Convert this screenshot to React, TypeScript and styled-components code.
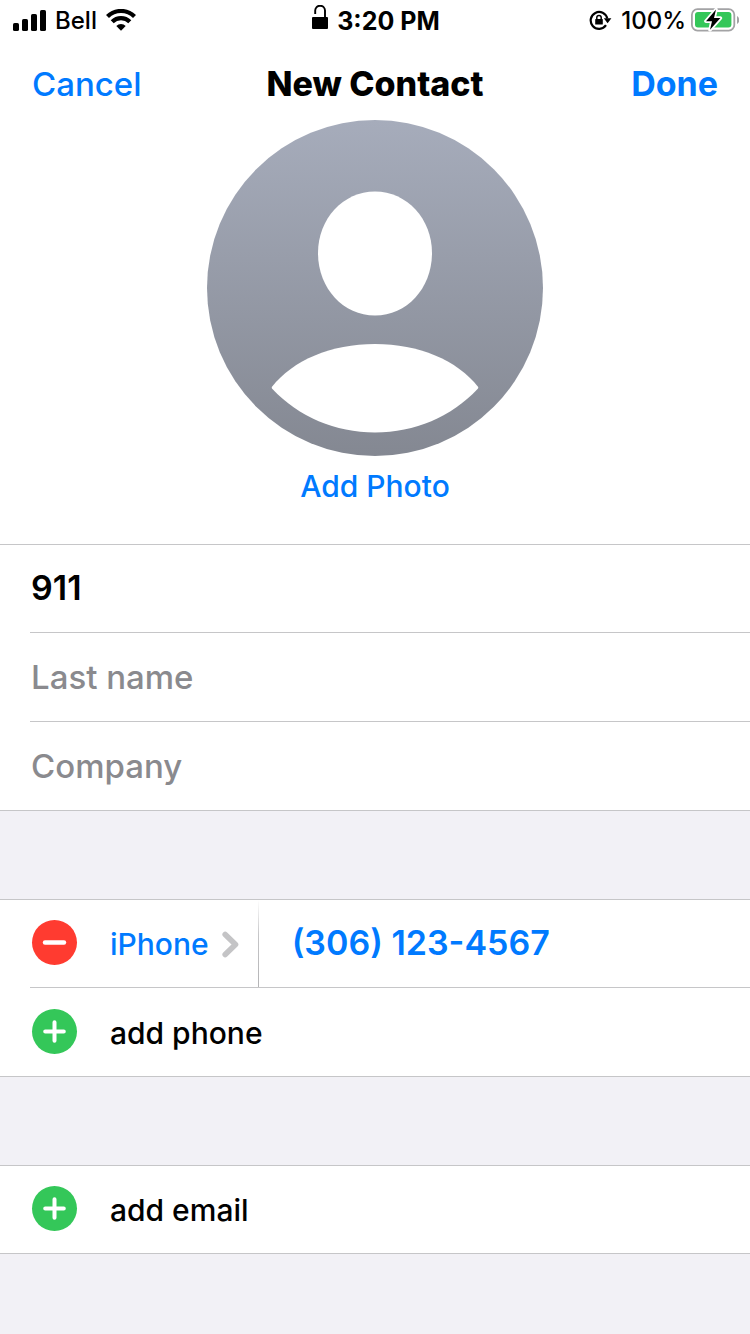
import React from "react";
import styled, { createGlobalStyle } from "styled-components";

const color = {
  blue: "#007aff",
  red: "#ff3b30",
  green: "#34c759",
  line: "#c6c6c8",
  placeholder: "#8a8a8e",
  grouped: "#f2f1f6",
  chevron: "#c4c4c6",
};

const GlobalStyle = createGlobalStyle`
  *, *::before, *::after { box-sizing: border-box; }
  html, body, #root { min-height: 100vh; }
  body {
    margin: 0;
    background: ${color.grouped};
    color: #000;
    font-family: Inter, "Liberation Sans", sans-serif;
  }
  button, input { font: inherit; color: inherit; }
`;

const Screen = styled.main`
  display: flex;
  flex-direction: column;
  min-height: 100vh;
  background: ${color.grouped};
`;

const StatusBar = styled.div`
  display: grid;
  grid-template-columns: 1fr auto 1fr;
  align-items: center;
  height: 40px;
  padding: 0 11px 0 13px;
  background: #fff;
  font-size: 24px;
  line-height: 38px;
`;

const StatusGroup = styled.div<{ $align: "start" | "center" | "end"; $gap: number }>`
  display: flex;
  align-items: center;
  justify-content: ${(p) => p.$align};
  gap: ${(p) => p.$gap}px;
  font-weight: 500;

  svg { display: block; flex: none; }
  span, time { padding-top: 2px; }
`;

const Time = styled.time`
  font-size: 25px;
  font-weight: 700;
`;

const NavBar = styled.header`
  display: grid;
  grid-template-columns: 1fr auto 1fr;
  align-items: center;
  height: 80px;
  padding: 8px 32px 0;
  background: #fff;
`;

const NavTitle = styled.h1`
  margin: 0;
  font-size: 34px;
  line-height: 40px;
  font-weight: 800;
`;

const TextButton = styled.button<{ $weight?: number; $size?: number; $side?: "start" | "end" }>`
  justify-self: ${(p) => p.$side ?? "center"};
  padding: 0;
  border: 0;
  background: none;
  color: ${color.blue};
  font-size: ${(p) => p.$size ?? 33}px;
  line-height: 40px;
  font-weight: ${(p) => p.$weight ?? 500};
  cursor: pointer;
`;

const PhotoArea = styled.section`
  display: flex;
  flex-direction: column;
  align-items: center;
  gap: 10px;
  padding-bottom: 38px;
  background: #fff;

  svg { display: block; }
`;

const Group = styled.section`
  border-top: 1px solid ${color.line};
  border-bottom: 1px solid ${color.line};
  background: #fff;

  & + & { margin-top: 88px; }
`;

const Row = styled.div`
  display: flex;
  align-items: center;
  height: 88px;
  margin-left: 30px;

  &:first-child { height: 87px; }
  & + & { border-top: 1px solid ${color.line}; height: 89px; }
`;

const Field = styled.input<{ $tint?: string }>`
  flex: 1;
  min-width: 0;
  height: 100%;
  padding: 0 0 2px 1px;
  border: 0;
  outline: 0;
  background: none;
  color: ${(p) => p.$tint ?? "#000"};
  font-size: 34px;
  font-weight: 600;

  &::placeholder {
    color: ${color.placeholder};
    font-size: 33px;
    font-weight: 500;
    opacity: 1;
  }
`;

const RoundButton = styled.button<{ $fill: string }>`
  display: grid;
  place-items: center;
  flex: none;
  width: 45px;
  height: 45px;
  margin: 0 33px 2px 2px;
  padding: 0;
  border: 0;
  border-radius: 50%;
  background: ${(p) => p.$fill};
  cursor: pointer;
`;

const LabelButton = styled.button<{ $tint?: string }>`
  display: flex;
  align-items: center;
  gap: 13px;
  padding: 1px 0 0;
  border: 0;
  background: none;
  color: ${(p) => p.$tint ?? "#000"};
  font-size: 30px;
  line-height: 40px;
  font-weight: 500;
  cursor: pointer;
`;

const Divider = styled.span`
  align-self: stretch;
  width: 1px;
  margin: 0 32px 0 19px;
  background: linear-gradient(to bottom, #fff, ${color.line} 40%, #b4b4b6);
`;

const SignalIcon = () => (
  <svg width="33" height="21" viewBox="0 0 33 21" aria-label="Signal">
    <rect x="0" y="13" width="6" height="8" rx="1.6" />
    <rect x="9" y="9" width="6" height="12" rx="1.6" />
    <rect x="18" y="4" width="6" height="17" rx="1.6" />
    <rect x="27" y="0" width="6" height="21" rx="1.6" />
  </svg>
);

const WifiIcon = () => (
  <svg width="30" height="22" viewBox="0 0 30 22" aria-label="Wi-Fi">
    <g fill="none" stroke="#000" strokeWidth="4.2">
      <path d="M1.5 7.5 A19.2 19.2 0 0 1 28.5 7.5" />
      <path d="M6.2 12.8 A12.3 12.3 0 0 1 23.8 12.8" />
    </g>
    <path d="M10.3 17 A6.8 6.8 0 0 1 19.7 17 L15 21.8 Z" />
  </svg>
);

const UnlockedIcon = () => (
  <svg width="17" height="30" viewBox="0 0 17 30" aria-label="Unlocked">
    <rect x="0" y="12" width="16" height="12" rx="1" />
    <path d="M3.2 9 V5.6 A4.9 4.9 0 0 1 13 5.6 V13" fill="none" stroke="#000" strokeWidth="1.9" />
  </svg>
);

const RotationLockIcon = () => (
  <svg width="27" height="20" viewBox="0 0 27 20" aria-label="Rotation lock">
    <path d="M17 15.2 A8.4 8.4 0 1 1 18.3 8.6" fill="none" stroke="#000" strokeWidth="2.2" />
    <path d="M14.8 8.2 H22.4 L18.6 13.2 Z" />
    <rect x="6.2" y="9" width="7.6" height="5.6" rx="0.6" />
    <path d="M7.8 9.4 V7.6 A2.2 2.2 0 0 1 12.2 7.6 V9.4" fill="none" stroke="#000" strokeWidth="1.5" />
  </svg>
);

const BatteryIcon = () => (
  <svg width="48" height="24" viewBox="0 0 48 24" aria-label="Battery charging">
    <rect x="0.9" y="1.2" width="42.4" height="21.4" rx="5.6" fill="none" stroke="#a3a3a5" strokeWidth="1.8" />
    <path d="M46 8 A4.6 4.6 0 0 1 46 16 Z" fill="#a3a3a5" />
    <rect x="4" y="4" width="36.4" height="15.6" rx="3" fill={color.green} />
    <path
      d="M25 1.6 L15 13.2 H21 L19 21.8 L29.4 10 H23 Z"
      fill="#000"
      stroke="#fff"
      strokeWidth="3.6"
      strokeLinejoin="round"
      paintOrder="stroke"
    />
  </svg>
);

const Avatar = () => (
  <svg width="336" height="336" viewBox="0 0 336 336" aria-hidden="true">
    <defs>
      <linearGradient id="avatar" x1="0" y1="0" x2="0" y2="1">
        <stop offset="0" stopColor="#a6acbb" />
        <stop offset="1" stopColor="#848892" />
      </linearGradient>
    </defs>
    <circle cx="168" cy="168" r="168" fill="url(#avatar)" />
    <path
      d="M168 71.5 C200 71.5 225 99 225 133 C225 168 200 195.5 168 195.5 C136 195.5 111 168 111 133 C111 99 136 71.5 168 71.5 Z"
      fill="#fff"
    />
    <path
      d="M64.8 267 C86 240 124 224 168 224 C212 224 250 240 271.2 267 Q271.5 268 270.8 268.8 C244 297 208 312.5 168 312.5 C128 312.5 92 297 65.2 268.8 Q64.5 268 64.8 267 Z"
      fill="#fff"
    />
  </svg>
);

const MinusIcon = () => (
  <svg width="45" height="45" viewBox="0 0 45 45" aria-hidden="true">
    <path d="M13 22.5 H32" stroke="#fff" strokeWidth="4.4" strokeLinecap="round" />
  </svg>
);

const PlusIcon = () => (
  <svg width="45" height="45" viewBox="0 0 45 45" aria-hidden="true">
    <path d="M13.2 22.5 H31.8 M22.5 13.2 V31.8" stroke="#fff" strokeWidth="4" strokeLinecap="round" />
  </svg>
);

const ChevronIcon = () => (
  <svg width="17" height="27" viewBox="0 0 17 27" aria-hidden="true">
    <path
      d="M3.2 3.4 L13.5 13.5 L3.2 23.6"
      fill="none"
      stroke={color.chevron}
      strokeWidth="5.6"
      strokeLinecap="round"
      strokeLinejoin="round"
    />
  </svg>
);

const AddRow = ({ label }: { label: string }) => (
  <Row>
    <RoundButton $fill={color.green} aria-label={label}>
      <PlusIcon />
    </RoundButton>
    <LabelButton>{label}</LabelButton>
  </Row>
);

export default function App() {
  return (
    <>
      <GlobalStyle />
      <Screen>
        <StatusBar>
          <StatusGroup $align="start" $gap={9}>
            <SignalIcon />
            <span>Bell</span>
            <WifiIcon />
          </StatusGroup>
          <StatusGroup $align="center" $gap={8}>
            <UnlockedIcon />
            <Time>3:20 PM</Time>
          </StatusGroup>
          <StatusGroup $align="end" $gap={5}>
            <RotationLockIcon />
            <span>100%</span>
            <BatteryIcon />
          </StatusGroup>
        </StatusBar>

        <NavBar>
          <TextButton $side="start">Cancel</TextButton>
          <NavTitle>New Contact</NavTitle>
          <TextButton $side="end" $size={34} $weight={700}>Done</TextButton>
        </NavBar>

        <PhotoArea>
          <Avatar />
          <TextButton $size={30}>Add Photo</TextButton>
        </PhotoArea>

        <Group>
          <Row>
            <Field aria-label="First name" placeholder="First name" defaultValue="911" />
          </Row>
          <Row>
            <Field aria-label="Last name" placeholder="Last name" />
          </Row>
          <Row>
            <Field aria-label="Company" placeholder="Company" />
          </Row>
        </Group>

        <Group>
          <Row>
            <RoundButton $fill={color.red} aria-label="Remove phone">
              <MinusIcon />
            </RoundButton>
            <LabelButton $tint={color.blue}>
              iPhone
              <ChevronIcon />
            </LabelButton>
            <Divider />
            <Field type="tel" aria-label="Phone" $tint={color.blue} defaultValue="(306) 123-4567" />
          </Row>
          <AddRow label="add phone" />
        </Group>

        <Group>
          <AddRow label="add email" />
        </Group>
      </Screen>
    </>
  );
}
